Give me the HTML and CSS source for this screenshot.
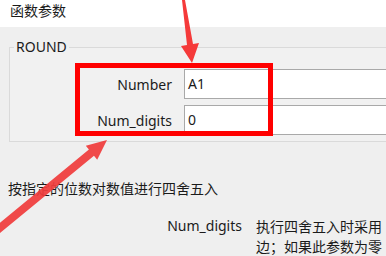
FILE: index.html
```html
<!DOCTYPE html>
<html lang="zh-CN">
<head>
    <meta charset="UTF-8">
    <title>函数参数</title>
    <link rel="stylesheet" href="styles.css">
</head>
<body>

<div class="titlebar">函数参数</div>

<fieldset class="group">
    <legend>ROUND</legend>
    <div class="arg-row">
        <label>Number</label>
        <div class="arg-input">A1</div>
    </div>
    <div class="arg-row">
        <label>Num_digits</label>
        <div class="arg-input">0</div>
    </div>
</fieldset>

<p class="summary">按指定的位数对数值进行四舍五入</p>

<div class="arg-help">
    <span class="arg-name">Num_digits</span>
    <span class="arg-text">执行四舍五入时采用<br>边；如果此参数为零</span>
</div>

<!-- 标注 -->
<div class="highlight"></div>
<svg class="arrows" width="386" height="256" viewBox="0 0 386 256">
    <polygon points="182,0 185,0 193,44 199,43 192,63 181,46 187,45" fill="#f53a3a"/>
    <polygon points="0,222.7 88.9,149.6 85.8,145.7 107,140 97.2,159.7 94,155.8 0,233" fill="#f03c3c" fill-opacity="0.93"/>
</svg>

</body>
</html>
```

FILE: styles.css
```css
body {
    margin: 0;
    width: 386px;
    height: 256px;
    overflow: hidden;
    position: relative;
    background-color: #efefef;
    color: #1b1b1b;
    font-family: "Noto Sans", "Noto Sans CJK SC", sans-serif;
    font-size: 14px;
}
.titlebar {
    height: 27px;
    padding-left: 10px;
    line-height: 20px;
    background-color: #ffffff;
    font-family: "Noto Sans CJK SC", sans-serif;
}
.group {
    margin: 11px 0 0 9px;
    padding: 13px 0 6px 4px;
    border: 1px solid #dadada;
    border-right: none;
    background-color: #f1f1f1;
}
.group legend {
    padding: 0 2px;
    line-height: 18px;
    font-size: 14px;
}
.arg-row {
    display: flex;
    align-items: center;
    gap: 12px;
    height: 30px;
}
.arg-row + .arg-row {
    margin-top: 6px;
}
.arg-row label {
    width: 158px;
    text-align: right;
}
.arg-input {
    flex: 1;
    height: 30px;
    box-sizing: border-box;
    border: 1px solid #a9a9a9;
    border-right: none;
    background-color: #ffffff;
    padding-left: 3px;
    line-height: 28px;
}
.summary {
    margin: 36px 0 0 8px;
    line-height: 20px;
    font-family: "Noto Sans CJK SC", sans-serif;
}
.arg-help {
    display: flex;
    margin-top: 18px;
    line-height: 20px;
    white-space: nowrap;
}
.arg-name {
    width: 242px;
    flex-shrink: 0;
    text-align: right;
}
.arg-text {
    margin-left: 14px;
    font-family: "Noto Sans CJK SC", sans-serif;
}
.highlight {
    position: absolute;
    left: 75px;
    top: 63px;
    width: 198px;
    height: 73px;
    box-sizing: border-box;
    border: 5px solid #ff0000;
}
.arrows {
    position: absolute;
    left: 0;
    top: 0;
}
```
